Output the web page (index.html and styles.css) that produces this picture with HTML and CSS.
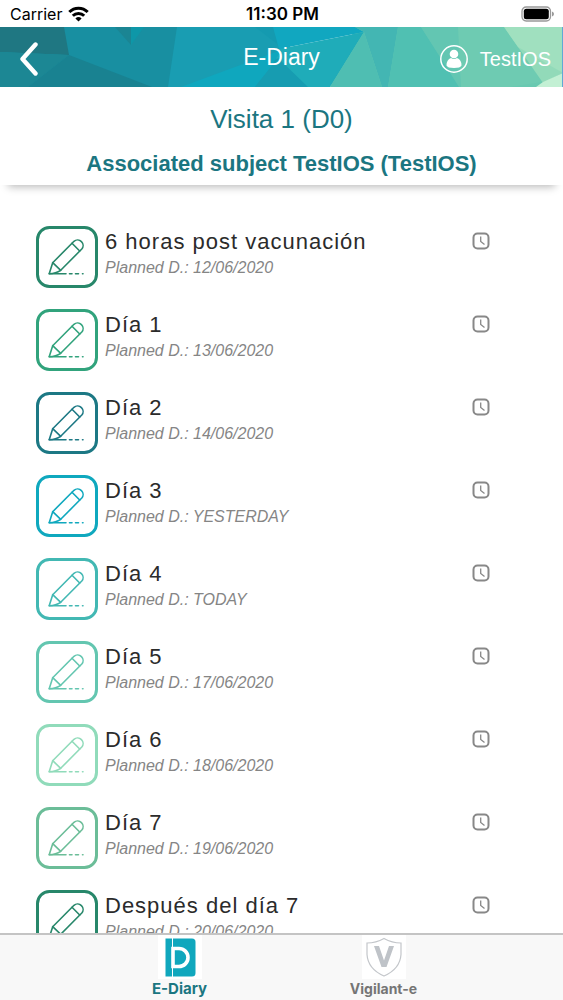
FILE: index.html
```html
<!DOCTYPE html>
<html lang="es">
<head>
<meta charset="utf-8">
<meta name="viewport" content="width=device-width, initial-scale=1">
<title>E-Diary</title>
<link rel="stylesheet" href="styles.css">
</head>
<body>
<svg class="defs" width="0" height="0" aria-hidden="true">
  <symbol id="pencil" viewBox="0 0 62 62">
    <rect x="1.5" y="1.5" width="59" height="59" rx="12" stroke-width="3"/>
    <g stroke-width="1.6" stroke-linejoin="round" stroke-linecap="round">
      <path d="M16.700 36.700 38 15.300a5.500 5.500 0 0 1 7.800 7.700L24.700 44.300Q20 47.500 13.200 47.700Z"/>
      <path d="m16.700 36.700 8 7.600M36 17.300l7.700 7.700M13.200 47.700H30M33.500 47.700h2.500M39.500 47.700h3M46.500 47.700h.5"/>
    </g>
  </symbol>
  <symbol id="clock" viewBox="0 0 18 18">
    <rect x="1.500" y="1.500" width="15" height="15" rx="4" stroke-width="2"/>
    <path d="M8.700 4.500v5l3.800 3" stroke-width="1.300"/>
  </symbol>
</svg>

<div class="status">
  <div class="carrier">Carrier
    <svg width="21" height="16" viewBox="0 0 21 16" aria-hidden="true"><g fill="none" stroke="#000" stroke-width="3"><path d="M1.300 6a13 13 0 0 1 18.400 0"/><path d="M4.800 9.800a8.100 8.100 0 0 1 11.400 0"/></g><path d="M7.400 12.400a4.500 4.500 0 0 1 6.200 0l-3.100 3.100Z"/></svg>
  </div>
  <div class="time">11:30 PM</div>
  <div class="battery">
    <svg width="34" height="16" viewBox="0 0 34 16" aria-hidden="true"><rect x="1" y="1" width="28.5" height="14" rx="4.2" fill="none" stroke="#999" stroke-width="1.3"/><rect x="2.8" y="2.8" width="25" height="10.4" rx="2.5"/><path d="M31 5.500q2 .6 2 2.500t-2 2.500Z" fill="#999"/></svg>
  </div>
</div>

<header class="bar">
  <svg class="facets" viewBox="0 0 563 60" preserveAspectRatio="none" aria-hidden="true">
    <path fill="#188fa1" d="M0 0H180L170 60H0Z"/>
    <path fill="#63c6b2" d="M355 0H563V60H330Z"/>
    <path fill="#1f7782" d="M0 0H64L69 28 0 25Z"/>
    <path fill="#1c8794" d="M0 25 69 28 28 60H0Z"/>
    <path fill="#198291" d="M69 28 152 60H28Z"/>
    <path fill="#1b8593" d="M115 0H131V18Z"/>
    <path fill="#0e97a8" d="M131 0H144L131 18Z"/>
    <path fill="#199db2" d="M177 0H290V60H168Z"/>
    <path fill="#159ab0" d="M255 0H274L281 10V20Z"/>
    <path fill="#11a7c0" d="M273 0H355L364 5 279 22Z"/>
    <path fill="#1facb9" d="M279 22 364 5 330 60H300L275 30Z"/>
    <path fill="#0fa7be" d="M181 60 281 23 271 40 255 60Z"/>
    <path fill="#179cb1" d="M278 31 308 60H255L271 40Z"/>
    <path fill="#43b6b3" d="M355 0H398L388 60H382L364 5Z"/>
    <path fill="#4fbeb2" d="M364 5 382 60H330Z"/>
    <path fill="#50c0b2" d="M398 0H421L460 60H388Z"/>
    <path fill="#63c6b2" d="M421 0H459L462 60H459Z"/>
    <path fill="#6ecbb2" d="M458 0H504L543 56 536 60H461Z"/>
    <path fill="#69c9b1" d="m510 60 32-5-6 5Z"/>
    <path fill="#92dab9" d="M504 0 543 56 563 46Z"/>
    <path fill="#a0e0bf" d="M504 0H563V46L518 20Z"/>
    <path fill="#c3f0d4" d="m543 55 20-9V60H536Z"/>
    <path fill="#5fa9d6" d="M562 0h1v60h-1Z"/>
  </svg>
  <button class="back" type="button" aria-label="Back">
    <svg width="20" height="34" viewBox="0 0 20 34" aria-hidden="true"><path d="M16.500 2.500 3.500 17l13 14.500" fill="none" stroke="#fff" stroke-width="4.400" stroke-linecap="round" stroke-linejoin="round"/></svg>
  </button>
  <h1 class="bar-title">E-Diary</h1>
  <button class="account" type="button">
    <svg width="28" height="28" viewBox="0 0 28 28" aria-hidden="true"><circle cx="14" cy="14" r="13.2" fill="none" stroke="#fff" stroke-width="1.5"/><circle cx="14" cy="9" r="4.300" fill="#fff"/><path d="M6.500 20.500q0-6 4.500-7.500 3 2 6 0 4.500 1.500 4.500 7.500-1 2.500-7.500 2.500t-7.500-2.500Z" fill="#fff"/></svg>
    <span>TestIOS</span>
  </button>
</header>

<section class="visit">
  <h2 class="visit-name">Visita 1 (D0)</h2>
  <p class="subject">Associated subject TestIOS (TestIOS)</p>
</section>

<main class="content">
  <ul class="list">
    <li><button class="entry green" type="button"><svg class="pencil"><use href="#pencil"/></svg><span class="texts"><span class="name">6 horas post vacunación</span><span class="date">Planned D.: 12/06/2020</span></span><svg class="clock"><use href="#clock"/></svg></button></li>
    <li><button class="entry jade" type="button"><svg class="pencil"><use href="#pencil"/></svg><span class="texts"><span class="name">Día 1</span><span class="date">Planned D.: 13/06/2020</span></span><svg class="clock"><use href="#clock"/></svg></button></li>
    <li><button class="entry petrol" type="button"><svg class="pencil"><use href="#pencil"/></svg><span class="texts"><span class="name">Día 2</span><span class="date">Planned D.: 14/06/2020</span></span><svg class="clock"><use href="#clock"/></svg></button></li>
    <li><button class="entry cyan" type="button"><svg class="pencil"><use href="#pencil"/></svg><span class="texts"><span class="name">Día 3</span><span class="date">Planned D.: YESTERDAY</span></span><svg class="clock"><use href="#clock"/></svg></button></li>
    <li><button class="entry teal" type="button"><svg class="pencil"><use href="#pencil"/></svg><span class="texts"><span class="name">Día 4</span><span class="date">Planned D.: TODAY</span></span><svg class="clock"><use href="#clock"/></svg></button></li>
    <li><button class="entry aqua" type="button"><svg class="pencil"><use href="#pencil"/></svg><span class="texts"><span class="name">Día 5</span><span class="date">Planned D.: 17/06/2020</span></span><svg class="clock"><use href="#clock"/></svg></button></li>
    <li><button class="entry mint" type="button"><svg class="pencil"><use href="#pencil"/></svg><span class="texts"><span class="name">Día 6</span><span class="date">Planned D.: 18/06/2020</span></span><svg class="clock"><use href="#clock"/></svg></button></li>
    <li><button class="entry sage" type="button"><svg class="pencil"><use href="#pencil"/></svg><span class="texts"><span class="name">Día 7</span><span class="date">Planned D.: 19/06/2020</span></span><svg class="clock"><use href="#clock"/></svg></button></li>
    <li><button class="entry green" type="button"><svg class="pencil"><use href="#pencil"/></svg><span class="texts"><span class="name">Después del día 7</span><span class="date">Planned D.: 20/06/2020</span></span><svg class="clock"><use href="#clock"/></svg></button></li>
  </ul>
</main>

<nav class="tabs">
  <a class="tab active" href="#diary">
    <svg width="44" height="44" viewBox="0 0 44 44" aria-hidden="true"><path fill="#fff" d="M0 0h44v44H0z"/><path fill="#10a7bd" d="M7.500 3.500H34a3.500 3.500 0 0 1 3.500 3.500v31a3.500 3.500 0 0 1-3.500 3.500H7.500Z"/><path d="M14.500 3v39" stroke="#fff" stroke-width="1"/><path d="M15 13.500H21a9 9 0 0 1 0 18H15Z" fill="none" stroke="#fff" stroke-width="3.600"/></svg>
    <span>E-Diary</span>
  </a>
  <a class="tab" href="#vigilant">
    <svg width="44" height="44" viewBox="0 0 44 44" aria-hidden="true"><path fill="#fff" d="M0 0h44v44H0z"/><path d="M22 3.500Q30 8 39 8V19.500Q38 34 22 41 6 34 5 19.500V8Q14 8 22 3.500Z" fill="none" stroke="#c3c6ca" stroke-width="1.200"/><path d="M12 11h5l5 14.500L27 11h5L24.500 32h-5Z" fill="#bfc3c8"/></svg>
    <span>Vigilant-e</span>
  </a>
</nav>
</body>
</html>
```
FILE: styles.css
```css
* { box-sizing: border-box; }

body {
  margin: 0;
  height: 100vh;
  display: flex;
  flex-direction: column;
  overflow: hidden;
  background: #fff;
  color: #2b2b2b;
  font-family: "Liberation Sans", Arial, sans-serif;
}

.defs { position: absolute; }

button {
  margin: 0;
  padding: 0;
  border: 0;
  background: none;
  color: inherit;
  font: inherit;
  cursor: pointer;
}

/* Status bar */
.status {
  flex: none;
  display: grid;
  grid-template-columns: 1fr auto 1fr;
  align-items: center;
  height: 27px;
  padding: 0 8px 0 10px;
  color: #000;
  font: 16px/24px Inter, sans-serif;
}
.carrier { display: flex; align-items: center; gap: 6px; }
.time { font-size: 17px; font-weight: 600; }
.battery { display: flex; justify-content: flex-end; }

/* Navigation bar */
.bar {
  position: relative;
  flex: none;
  display: grid;
  grid-template-columns: 1fr auto 1fr;
  align-items: center;
  height: 60px;
  padding: 0 12px;
  color: #fff;
}
.facets {
  position: absolute;
  inset: 0;
  z-index: -1;
  width: 100%;
  height: 100%;
}
.back { justify-self: start; display: flex; padding: 4px 0 0 7px; }
.bar-title { margin: 0; font-size: 23px; line-height: 28px; font-weight: 400; }
.account {
  justify-self: end;
  display: flex;
  align-items: center;
  gap: 12px;
  padding-top: 4px;
  font-size: 20px;
  line-height: 24px;
}

/* Visit heading */
.visit {
  flex: none;
  padding: 16px 12px 6px;
  color: #1b7681;
  text-align: center;
  box-shadow: 0 10px 8px -8px #bbb;
}
.visit-name { margin: 0 0 14px; font-size: 26px; line-height: 32px; font-weight: 400; }
.subject { margin: 0; font-size: 22px; line-height: 30px; font-weight: 700; }

/* Diary entries */
.content { flex: 1; min-height: 0; overflow: hidden; padding: 41px 72px 0 36px; }
.list {
  display: flex;
  flex-direction: column;
  gap: 21px;
  margin: 0;
  padding: 0;
  list-style: none;
}
.entry {
  display: flex;
  align-items: flex-start;
  width: 100%;
  text-align: left;
}
.pencil { flex: none; width: 62px; height: 62px; fill: none; stroke: currentColor; }
.texts { flex: 1; padding: 2px 0 0 7px; }
.name, .date { display: block; }
.name { color: #2b2b2b; font-size: 22px; line-height: 28px; letter-spacing: 1px; }
.date { color: #858585; font-size: 16px; line-height: 24px; font-style: italic; }
.clock { flex: none; width: 18px; height: 18px; margin: 6px 1px 0 0; fill: none; stroke: #888; }

.green { color: #27876a; }
.jade { color: #31a37c; }
.petrol { color: #1c7884; }
.cyan { color: #0fa8be; }
.teal { color: #42b8b3; }
.aqua { color: #63c6b0; }
.mint { color: #90dbba; }
.sage { color: #6bbd98; }

/* Tab bar */
.tabs {
  flex: none;
  display: flex;
  justify-content: center;
  gap: 24px;
  height: 67px;
  border-top: 2px solid #c4c4c4;
  background: #f8f8f8;
}
.tab {
  display: flex;
  flex-direction: column;
  align-items: center;
  width: 180px;
  color: #757575;
  font: 700 14px/20px Inter, sans-serif;
  text-decoration: none;
}
.tab.active { color: #1b7681; font-size: 15px; }
```
